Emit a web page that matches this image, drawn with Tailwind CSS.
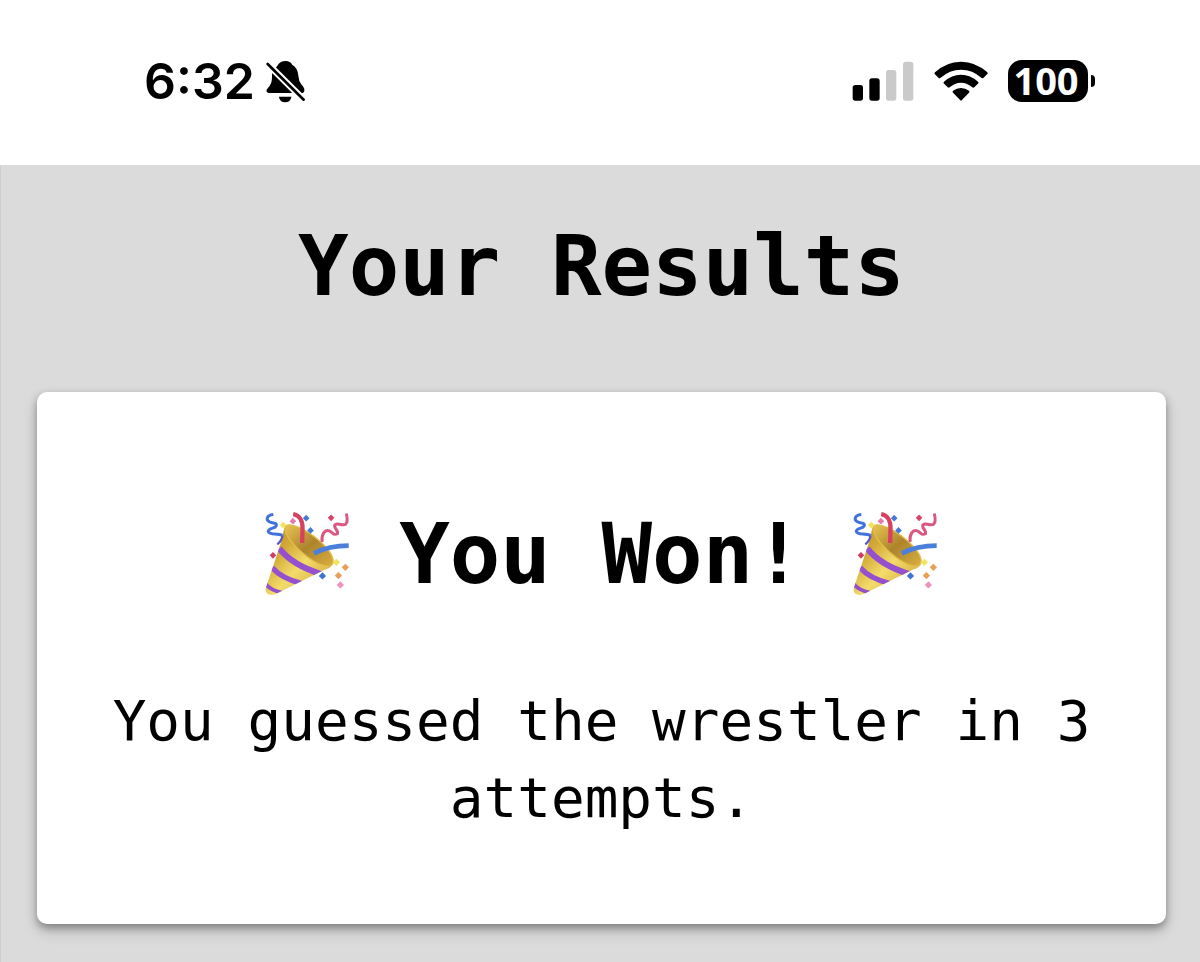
<!DOCTYPE html>
<html lang="en">
<head>
    <meta charset="UTF-8">
    <meta name="viewport" content="width=device-width, initial-scale=1.0">
    <title>Your Results</title>
    <script src="https://cdn.jsdelivr.net/npm/@tailwindcss/browser@4"></script>
</head>
<body class="min-h-screen flex flex-col bg-white text-black font-['DejaVu_Sans_Mono',monospace]">
    <!-- Party popper, used on both sides of the win message -->
    <svg class="absolute w-0 h-0" aria-hidden="true">
        <defs>
            <linearGradient id="cone" x1="0" y1="0" x2="1" y2="1">
                <stop offset="0" stop-color="#b98d28"/>
                <stop offset=".3" stop-color="#d3a937"/>
                <stop offset=".55" stop-color="#f3dc6b"/>
                <stop offset="1" stop-color="#c8962c"/>
            </linearGradient>
            <linearGradient id="inside" x1="0" y1="0" x2="1" y2="1">
                <stop offset="0" stop-color="#e9c552"/>
                <stop offset=".5" stop-color="#ad842c"/>
                <stop offset="1" stop-color="#d9af3f"/>
            </linearGradient>
            <clipPath id="coneClip">
                <path d="M103 76Q96 88 94 112L44 262Q40 277 51 282Q62 288 78 279L222 208Q243 202 245 188Z"/>
            </clipPath>
        </defs>
        <symbol id="popper" viewBox="38 32 262 258">
            <path d="M103 76Q96 88 94 112L44 262Q40 277 51 282Q62 288 78 279L222 208Q243 202 245 188Z" fill="url(#cone)"/>
            <g clip-path="url(#coneClip)" fill="none" stroke="#9550cf">
                <path d="M84 144Q122 194 212 222" stroke-width="18"/>
                <path d="M62 202Q92 236 152 250" stroke-width="16"/>
                <path d="M42 250Q56 270 94 278" stroke-width="12"/>
            </g>
            <path d="M104 76C118 66 162 84 202 119C238 150 254 178 243 193C230 206 190 190 152 156C116 124 94 92 104 76Z" fill="url(#inside)" stroke="#e3bd4b" stroke-width="4"/>
            <path d="M126 41C146 44 155 62 154 86L153 128" fill="none" stroke="#d8405f" stroke-width="13"/>
            <path d="M188 159C216 145 250 136 293 136" fill="none" stroke="#4c7fdc" stroke-width="14"/>
            <path d="M66 42C44 45 44 58 54 64C64 70 78 66 75 76C70 86 50 82 51 93C56 106 78 96 94 105" fill="none" stroke="#3f72dc" stroke-width="9"/>
            <path d="M94 105C92 118 86 126 78 132" fill="none" stroke="#5b55c8" stroke-width="7"/>
            <path d="M213 125C210 102 222 86 234 91C248 98 246 106 259 100C264 90 245 82 252 73C262 66 276 78 284 71C290 65 289 52 286 39" fill="none" stroke="#da5880" stroke-width="9"/>
            <path d="M96 64l10 10-10 10-10-10z" fill="#f2e45c"/>
            <path d="M125 52l10 10-10 10-10-10z" fill="#e77bae"/>
            <path d="M165 43l10 10-10 10-10-10z" fill="#4479d8"/>
            <path d="M178 80l10 10-10 10-10-10z" fill="#4479d8"/>
            <path d="M240 42l10 10-10 10-10-10z" fill="#d64568"/>
            <path d="M65 155l10 10-10 10-10-10z" fill="#d13c64"/>
            <path d="M256 175l11 11-11 11-11-11z" fill="#f2e45c"/>
            <path d="M283 190l11 11-11 11-11-11z" fill="#e9a056"/>
            <path d="M262 215l11 11-11 11-11-11z" fill="#e9a056"/>
            <path d="M214 216l11 11-11 11-11-11z" fill="#3d72d6"/>
            <path d="M268 243l11 11-11 11-11-11z" fill="#ec92bd"/>
        </symbol>
    </svg>

    <!-- Status Bar -->
    <header class="flex items-center justify-between pt-12 pb-[51px] pl-36 pr-[105px]">
        <div class="flex items-center gap-2.5">
            <span class="font-['Inter',sans-serif] font-semibold text-[50px] leading-[66px]">6:32</span>
            <svg class="w-[41px] h-[43px]" viewBox="402 60 122 130" role="img" aria-label="Silent mode">
                <path d="M438 78Q446 63 463 63Q478 63 483 74Q500 83 502 108Q503 124 511 134Q521 144 520 152Q519 160 511 160H412Q404 158 406 150C414 139 421 134 422 116Q422 106 423 96Z"/>
                <path d="M443 171H481Q478 188 462 188Q446 188 443 171Z"/>
                <path d="M412 75L520 182" stroke="#fff" stroke-width="20"/>
                <path d="M409 72L518 180" stroke="#000" stroke-width="8" stroke-linecap="round"/>
            </svg>
        </div>
        <div class="flex items-center gap-5">
            <svg class="w-[62px] h-10" viewBox="34 61 186 120" role="img" aria-label="Signal">
                <rect x="36" y="133" width="31" height="47" rx="8"/>
                <rect x="86" y="113" width="31" height="67" rx="8"/>
                <rect x="136" y="88" width="31" height="92" rx="8" fill="#cacaca"/>
                <rect x="187" y="63" width="31" height="117" rx="8" fill="#cacaca"/>
            </svg>
            <svg class="w-[54px] h-10" viewBox="280 60 162 120" role="img" aria-label="Wi-Fi">
                <path d="M283 94Q317 62 361 62Q405 62 440 94Q442 97 440 99L428 111Q426 113 423 111Q396 86 361 86Q327 86 299 111Q296 113 294 111L282 99Q280 97 283 94Z"/>
                <path d="M310 122Q333 101 361 101Q389 101 412 122Q415 125 413 127L401 139Q398 141 395 139Q380 125 361 125Q342 125 327 139Q324 141 321 139L309 127Q307 125 310 122Z"/>
                <path d="M337 149Q348 141 361 141Q374 141 385 149Q388 152 385 155L363 178Q361 180 359 178L337 155Q334 152 337 149Z"/>
            </svg>
            <div class="flex items-center gap-[3px]">
                <span class="w-20 h-[42px] rounded-[14px] bg-black text-white text-center font-['Open_Sans',sans-serif] font-bold text-[38px] leading-10 pr-1">100</span>
                <span class="w-1 h-3 rounded-r-full bg-black"></span>
            </div>
        </div>
    </header>

    <!-- Results -->
    <main class="flex-1 bg-[#dbdbdb] border-l border-[#cfcfcf] pt-[45px] pb-9 pl-9 pr-[34px] text-center">
        <h1 class="font-bold text-[84px] leading-[112px]">Your Results</h1>

        <section class="mt-[70px] bg-white rounded-[10px] pt-[106px] pb-[88px] px-16 shadow-[0_4px_8px_rgba(0,0,0,0.35),0_8px_16px_rgba(0,0,0,0.12)]">
            <h2 class="flex items-center justify-center gap-12 font-bold text-[84px] leading-[112px]">
                <svg class="w-[87px] h-[86px]" role="img" aria-label="Party popper"><use href="#popper"/></svg>
                You Won!
                <svg class="w-[87px] h-[86px]" role="img" aria-label="Party popper"><use href="#popper"/></svg>
            </h2>
            <p class="mt-[72px] text-[56px] leading-[77px]">You guessed the wrestler in 3 attempts.</p>
        </section>
    </main>
</body>
</html>
